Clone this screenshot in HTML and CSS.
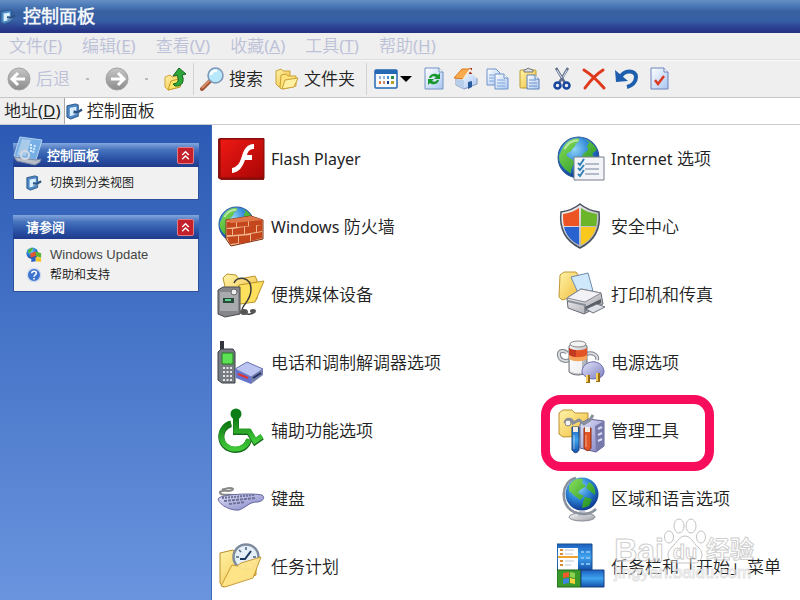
FILE: index.html
```html
<!DOCTYPE html>
<html lang="zh-CN">
<head>
  <meta charset="UTF-8">
  <title>控制面板</title>
  <link rel="stylesheet" href="styles.css">
</head>
<body>
  <!-- shared shapes and gradients -->
  <svg class="defs" width="0" height="0" aria-hidden="true">
    <defs>
      <radialGradient id="sea" cx="40%" cy="30%" r="75%">
        <stop offset="0" stop-color="#8fd4f7"/><stop offset=".5" stop-color="#2b83d6"/><stop offset="1" stop-color="#0a2f86"/>
      </radialGradient>
      <linearGradient id="land" x2="1" y2="1"><stop offset="0" stop-color="#8be05a"/><stop offset="1" stop-color="#178a1d"/></linearGradient>
      <linearGradient id="folder" x2="1" y2="1"><stop offset="0" stop-color="#fff3a8"/><stop offset="1" stop-color="#f0bd3c"/></linearGradient>
      <linearGradient id="metal" x2="1" y2="1"><stop offset="0" stop-color="#fdfdfd"/><stop offset="1" stop-color="#9b9ba4"/></linearGradient>
      <linearGradient id="lilac" x2="1" y2="1"><stop offset="0" stop-color="#e6e6fa"/><stop offset="1" stop-color="#7a7cc0"/></linearGradient>
      <linearGradient id="paper" x2="1" y2="1"><stop offset="0" stop-color="#fff"/><stop offset="1" stop-color="#a9c6f2"/></linearGradient>
      <linearGradient id="gray" x2="0" y2="1"><stop offset="0" stop-color="#c6c6c6"/><stop offset="1" stop-color="#8c8c8c"/></linearGradient>
      <linearGradient id="red" x2="1" y2="1"><stop offset="0" stop-color="#ef1a14"/><stop offset="1" stop-color="#a80505"/></linearGradient>
      <linearGradient id="green" x2="0" y2="1"><stop offset="0" stop-color="#0d7a12"/><stop offset="1" stop-color="#42c93a"/></linearGradient>
      <linearGradient id="blue" x2="0" y2="1"><stop offset="0" stop-color="#1c5fc0"/><stop offset=".5" stop-color="#3fa4ee"/><stop offset="1" stop-color="#1450ac"/></linearGradient>
      <symbol id="globe" viewBox="0 0 40 40">
        <circle cx="20" cy="20" r="19" fill="url(#sea)" stroke="#28549a"/>
        <path d="M4 14C7 6 13 2 20 2c2 2 0 4-3 5 1 3-3 4-4 7-2 2-4 1-4 4 2 3 5 3 7 6-1 4-3 6-3 11C6 31 1 25 2 18zM26 3c5 2 9 5 11 10l-4 3 1 5c2 1 3 1 4 0-1 6-4 10-8 13-3-3-3-6-2-9-3-2-5-5-4-8l5-4-1-4 2-3z" fill="url(#land)"/>
        <path d="M7 12C10 6 14 4 20 4" fill="none" stroke="#fff" stroke-width="2" opacity=".5"/>
      </symbol>
      <symbol id="panel" viewBox="0 0 18 18">
        <path d="M1 3l9-2 3 1v12l-8 3-4-2z" fill="#4a86c4" stroke="#2a5486"/>
        <path d="M4 5l7-1v8l-7 2z" fill="#dcefff"/>
        <path d="M8 9l4 1 5-3" fill="none" stroke="#2a5486" stroke-width="2.500"/>
        <path d="M8 11l3 1 3-1" fill="none" stroke="#6a8fb8" stroke-width="1.500"/>
      </symbol>
      <symbol id="chevrons" viewBox="0 0 18 18">
        <path d="M5 8.500l4-4 4 4M5 13.500l4-4 4 4" fill="none" stroke="#fff" stroke-width="1.600"/>
      </symbol>
    </defs>
  </svg>

  <header class="titlebar">
    <svg class="title-icon" viewBox="0 0 18 18"><use href="#panel"/></svg>
    <h1>控制面板</h1>
  </header>

  <nav class="menubar">
    <button>文件(<u>F</u>)</button>
    <button>编辑(<u>E</u>)</button>
    <button>查看(<u>V</u>)</button>
    <button>收藏(<u>A</u>)</button>
    <button>工具(<u>T</u>)</button>
    <button>帮助(<u>H</u>)</button>
  </nav>

  <div class="toolbar">
    <button class="tool off">
      <svg viewBox="0 0 24 24"><circle cx="12" cy="12" r="11" fill="url(#gray)" stroke="#a2a2a2"/><path d="M11 6l-6 6 6 6M6 12h12" fill="none" stroke="#fff" stroke-width="3"/></svg>
      <span>后退</span>
    </button>
    <span class="dot"></span>
    <button class="tool off" aria-label="前进">
      <svg viewBox="0 0 24 24"><circle cx="12" cy="12" r="11" fill="url(#gray)" stroke="#a2a2a2"/><path d="M13 6l6 6-6 6M18 12H6" fill="none" stroke="#fff" stroke-width="3"/></svg>
    </button>
    <span class="dot"></span>
    <button class="tool up" aria-label="向上">
      <svg viewBox="0 0 24 24">
        <path d="M1 10l5-2 2 2 8-2v12L4 23l-3-3z" fill="url(#folder)" stroke="#d0a436"/>
        <path d="M4 23l3-9 12-3-3 9z" fill="#ffe567" stroke="#c79a2c"/>
        <path d="M9 17c6-1 6-4 4-9l-4 1 6-8 7 6-4 1c3 6 0 12-7 11z" fill="#2fa63a" stroke="#12651c"/>
      </svg>
    </button>
    <span class="sep"></span>
    <button class="tool search">
      <svg viewBox="0 0 24 24">
        <path d="M2 22l8-8" stroke="#a4583a" stroke-width="4" stroke-linecap="round"/>
        <path d="M2 21l8-8" stroke="#e59a72" stroke-width="1.500"/>
        <circle cx="15.500" cy="8.500" r="7.500" fill="#b8e8fb" stroke="#7c95b8" stroke-width="1.500"/>
        <path d="M11 8c0-3 3-5 6-4" fill="none" stroke="#fff" stroke-width="2.500"/>
      </svg>
      <span>搜索</span>
    </button>
    <button class="tool folders">
      <svg viewBox="0 0 24 24">
        <path d="M1 4l5-2 2 2h7v11L4 20l-3-3z" fill="url(#folder)" stroke="#c9a136"/>
        <path d="M6 8l5-1 2 2 8 0v10L8 22l-3-1z" fill="#ffe279" stroke="#c9a136"/>
        <path d="M7 22l3-9 13-2-4 9z" fill="#fff0a2" stroke="#c9a136"/>
      </svg>
      <span>文件夹</span>
    </button>
    <span class="sep"></span>
    <button class="tool views" aria-label="查看">
      <svg viewBox="0 0 24 24">
        <rect x="1" y="3" width="22" height="18" rx="1" fill="#f7fbff" stroke="#2468b4" stroke-width="1.500"/>
        <path d="M1 3h22v4H1z" fill="#2468b4"/>
        <path d="M5 9h2v3H5zM9 9h2v3H9z" fill="#8fb1d8"/><path d="M13 9h2v3h-2z" fill="#3c8dd0"/><path d="M17 9h3v3h-3z" fill="#298b40"/>
        <path d="M5 14h2v3H5z" fill="#e27b38"/><path d="M9 14h2v3H9z" fill="#d0906c"/><path d="M13 14h2v3h-2z" fill="#163a7a"/><path d="M17 14h3v3h-3z" fill="#b8a020"/>
      </svg>
      <svg class="arrow" viewBox="0 0 12 6"><path d="M0 0h12L6 6z"/></svg>
    </button>
    <div class="tools">
      <button class="tool" aria-label="刷新">
        <svg viewBox="0 0 24 24"><path d="M3 1h14l4 4v17H3z" fill="url(#paper)" stroke="#7292c4"/><path d="M17 1v4h4" fill="#fff" stroke="#7292c4"/><path d="M7 11c1-5 7-5 9-3l2-2v6h-6l2-2c-2-1-4-1-5 1zM17 13c-1 5-7 5-9 3l-2 2v-6h6l-2 2c2 1 4 1 5-1z" fill="#16982a"/></svg>
      </button>
      <button class="tool" aria-label="主页">
        <svg viewBox="0 0 24 24"><path d="M2 11v7l8 4 13-5v-7l-6-6z" fill="url(#paper)" stroke="#8496b8"/><path d="M2 12v6l8 4v-9z" fill="#b8cdea"/><path d="M14 15l4-1v6l-4 2z" fill="#285a9c"/><path d="M15 1h3v6h-3z" fill="#a33420"/><path d="M0 11L8 2l9 0-7 10z" fill="#f9ab4c" stroke="#d67a22"/><path d="M9 13l7-10 8 8" fill="none" stroke="#f2ede6" stroke-width="2"/></svg>
      </button>
      <button class="tool" aria-label="复制">
        <svg viewBox="0 0 24 24"><path d="M1 2h9l4 4v12H1z" fill="url(#paper)" stroke="#6f92c8"/><path d="M3 8h5M3 11h5M3 14h5" stroke="#7da6da"/><path d="M9 7h9l4 4v11H9z" fill="url(#paper)" stroke="#6f92c8"/><path d="M18 7v4h4" fill="#fff" stroke="#6f92c8"/><path d="M11 13h8M11 16h8M11 19h8" stroke="#7da6da"/></svg>
      </button>
      <button class="tool" aria-label="粘贴">
        <svg viewBox="0 0 24 24"><rect x="2" y="3" width="16" height="18" rx="1" fill="url(#folder)" stroke="#b79a34"/><path d="M6 5V3l3-1 1-1 2 1 3 1v2z" fill="#d8dce4" stroke="#777"/><path d="M9 8h8l4 4v10H9z" fill="url(#paper)" stroke="#5c80b8"/><path d="M17 8v4h4" fill="#fff" stroke="#5c80b8"/><path d="M11 13h7M11 16h8M11 19h8" stroke="#6d93c8"/></svg>
      </button>
      <button class="tool" aria-label="剪切">
        <svg viewBox="0 0 24 24"><path d="M6 1l9 15M18 1L9 16" stroke="#5f6f8c" stroke-width="2.500"/><path d="M7 3l5 8M17 3l-4 7" stroke="#dfe6f2"/><circle cx="7.500" cy="18.500" r="3" fill="none" stroke="#17479e" stroke-width="2.500"/><circle cx="16.500" cy="18.500" r="3" fill="none" stroke="#17479e" stroke-width="2.500"/></svg>
      </button>
      <button class="tool" aria-label="删除">
        <svg viewBox="0 0 24 24"><path d="M2 3c8 5 14 11 20 18M21 3C13 8 8 14 3 21" fill="none" stroke="#df3a1d" stroke-width="3" stroke-linecap="round"/></svg>
      </button>
      <button class="tool" aria-label="撤消">
        <svg viewBox="0 0 24 24"><path d="M6 11c4-9 16-8 16-1 0 5-4 9-9 10" fill="none" stroke="#1d5fae" stroke-width="4"/><path d="M1 3l1 12 12-1z" fill="#1d5fae"/></svg>
      </button>
      <button class="tool" aria-label="属性">
        <svg viewBox="0 0 24 24"><path d="M5 1h13l4 4v17H5z" fill="url(#paper)" stroke="#6a82ba"/><path d="M18 1v4h4" fill="#fff" stroke="#6a82ba"/><path d="M9 13l3 4 6-8" fill="none" stroke="#d9391f" stroke-width="2.500"/></svg>
      </button>
    </div>
  </div>

  <div class="addressbar">
    <label for="address">地址(<u>D</u>)</label>
    <div class="address-box">
      <svg viewBox="0 0 18 18"><use href="#panel"/></svg>
      <input type="text" id="address" value="控制面板">
    </div>
  </div>

  <div class="content">
    <aside class="sidebar">
      <section class="panel">
        <div class="panel-head with-icon">
          <svg class="panel-icon" viewBox="0 0 30 30">
            <path d="M7 1l22 3-6 20L1 20z" fill="#76aee6" stroke="#b6d2ee"/>
            <path d="M9 3l9 1-5 16-9-1z" fill="#a9cbe9"/>
            <path d="M18 8v9M22 9l-2 8" stroke="#d7ecff" stroke-width="2" stroke-dasharray="2 1"/>
            <path d="M1 21l22 3 5-1-1 3-5 3L4 25z" fill="#b7bdc9" stroke="#7b8aa5"/>
            <circle cx="12" cy="19" r="4" fill="none" stroke="#d5d9e2" stroke-width="2"/>
          </svg>
          <h2>控制面板</h2>
          <button class="collapse" aria-label="折叠"><svg viewBox="0 0 18 18"><use href="#chevrons"/></svg></button>
        </div>
        <div class="panel-body">
          <a href="#"><svg viewBox="0 0 18 18"><use href="#panel"/></svg>切换到分类视图</a>
        </div>
      </section>
      <section class="panel">
        <div class="panel-head">
          <h2>请参阅</h2>
          <button class="collapse" aria-label="折叠"><svg viewBox="0 0 18 18"><use href="#chevrons"/></svg></button>
        </div>
        <div class="panel-body">
          <a class="latin" href="#">
            <svg viewBox="0 0 18 18"><circle cx="7" cy="7" r="6.500" fill="url(#sea)"/><path d="M2 4c2-3 5-3 6-3l-2 4-3 2z" fill="#4bb83c"/><path d="M5 7l6-2v5l-6 2z" fill="#e6552a"/><path d="M11 5l6 2v5l-6-2z" fill="#5cb234"/><path d="M6 12l5-1v5l-5 1z" fill="#2b62c8"/><path d="M11 11l6 1v5l-6-1z" fill="#f1c52c"/></svg>Windows Update</a>
          <a href="#">
            <svg viewBox="0 0 18 18"><circle cx="9" cy="9" r="7.500" fill="#3d74cf" stroke="#cfdcf2" stroke-width="1.500"/><path d="M6.500 7c0-3 5.500-3 5 0 0 2-2.500 2-2.500 4M9 12.500v1.500" fill="none" stroke="#fff" stroke-width="1.800"/></svg>帮助和支持</a>
        </div>
      </section>
    </aside>

    <main class="items">
      <a class="item" href="#">
        <svg viewBox="0 0 48 48"><path d="M1 4l2-1h44v42H4l-3-2z" fill="#8d1513"/><rect x="3" y="4" width="44" height="39" fill="url(#red)" stroke="#7c0a08"/><path d="M37 9v5c-4 0-6 2-7 6h5v5h-7c-3 8-6 12-13 13v-5c6-1 8-6 10-12 2-7 5-12 12-12z" fill="#fff"/></svg>
        <span class="en">Flash Player</span>
      </a>
      <a class="item" href="#">
        <svg viewBox="0 0 48 48"><use href="#globe" x="1" y="3" width="37" height="37"/><path d="M9 17l25-4 12 4v19L14 43l-5-7z" fill="#f0b48a" stroke="#7e3112"/><g fill="#c4461c"><path d="M10 19l9-1v6l-9 1zM20 18l11-1v6l-11 1zM32 16l13 1v5l-13 1zM10 26h5v6h-5zM16 26l11-2v7l-11 1zM28 24l11-2v7l-11 2zM40 23l5-1v6l-5 1zM10 34l11-1v7l-8 1zM22 33l11-1v7l-11 2zM34 31l11-2v6l-11 3z"/></g><path d="M9 17l25-4 12 4-32 3z" fill="#e0774a"/></svg>
        <span><span class="en">Windows</span> 防火墙</span>
      </a>
      <a class="item" href="#">
        <svg viewBox="0 0 48 48"><path d="M6 7l4-4 9 1 3 4 16-3 2 4v19L12 33z" fill="url(#folder)" stroke="#b9932a"/><path d="M16 34l6-20 25-4-9 21z" fill="#ffe05c" stroke="#b9932a"/><path d="M1 19l5-3h17v27L8 46l-7-3z" fill="#85868a" stroke="#4a4a4e"/><path d="M3 21h18v19H3z" fill="#a8aaae"/><path d="M6 27h11v5H6z" fill="#28493a"/><path d="M8 29h6" stroke="#5fd08b" stroke-width="2"/><circle cx="17" cy="21" r="3" fill="#eee" stroke="#666"/><path d="M17 12c3-8 17-6 17 6 0 10-6 14-8 18-4 7 7 9 12 5" fill="none" stroke="#3a3a3a" stroke-width="1.500"/><ellipse cx="27" cy="41" rx="4" ry="3" fill="#555"/><ellipse cx="36" cy="40" rx="3" ry="2" fill="#555"/></svg>
        <span>便携媒体设备</span>
      </a>
      <a class="item" href="#">
        <svg viewBox="0 0 48 48"><path d="M3 2h4v12H3z" fill="#33363c"/><path d="M1 13l3-3h12l2 3v31H5l-4-3z" fill="#777b82" stroke="#3b3e44"/><path d="M5 14h11v11H5z" fill="#5de055" stroke="#267b25"/><path d="M6 29h9M6 33h9M6 37h9M6 41h9" stroke="#e8e8e8" stroke-width="2" stroke-dasharray="2 1.500"/><path d="M18 30l12-7 16 7-12 8z" fill="#bcc4f2" stroke="#6771ad"/><path d="M18 30l16 8v7l-15-6z" fill="#6673cc"/><path d="M34 38l12-8v6l-12 9z" fill="#7680ae"/><path d="M21 35l10 4" stroke="#e03434" stroke-width="2"/><path d="M36 39l8-5" stroke="#27325e" stroke-width="2"/></svg>
        <span>电话和调制解调器选项</span>
      </a>
      <a class="item" href="#">
        <svg viewBox="0 0 48 48"><g fill="none" stroke="#15691b" stroke-width="6"><path d="M14 17C0 21 1 42 18 43c8 0 12-4 14-10"/><path d="M19 12v13h13l6 10 7-5"/></g><circle cx="19" cy="7" r="5.500" fill="#0c7d17"/><g fill="none" stroke="url(#green)" stroke-width="5"><path d="M14 16C0 20 1 41 18 42c8 0 12-4 14-10"/><path d="M19 11v13h13l6 10 7-5"/></g></svg>
        <span>辅助功能选项</span>
      </a>
      <a class="item" href="#">
        <svg viewBox="0 0 48 48"><path d="M20 21c-4-3-18 1-17-4 2-3 12 1 13-3-3-3-9 1-11 0" fill="none" stroke="#888" stroke-width="2"/><path d="M1 24c2-5 36-6 44-4 4 3 0 7-5 7-8 0-10 5-18 8-7 1-19-4-21-11z" fill="url(#lilac)" stroke="#6466a0"/><path d="M5 23l33-3" stroke="#6c6e98" stroke-width="2" stroke-dasharray="2 1"/><path d="M7 26l32-3" stroke="#6c6e98" stroke-width="2" stroke-dasharray="3 1"/><path d="M12 29l16-2" stroke="#6c6e98" stroke-width="2" stroke-dasharray="3 1"/></svg>
        <span>键盘</span>
      </a>
      <a class="item" href="#">
        <svg viewBox="0 0 48 48"><path d="M3 10l13-3 3 4 20-2v23L6 44l-3-4z" fill="url(#folder)" stroke="#b98d2a"/><circle cx="29" cy="14" r="12.500" fill="#e5eff8" stroke="#7d8b9c" stroke-width="2.500"/><path d="M29 4v3M29 21v3M19 14h3M36 14h3M22 7l2 2M34 19l2 2" stroke="#4b6485" stroke-width="1.500"/><path d="M34 8l-6 8h-5" fill="none" stroke="#1d3860" stroke-width="2"/><path d="M4 43l11-21 5 1 4-3 20-6-8 21-28 9z" fill="#ffe489" stroke="#c69831" opacity=".95"/></svg>
        <span>任务计划</span>
      </a>

      <a class="item" href="#">
        <svg viewBox="0 0 48 48"><use href="#globe" x="0" y="1" width="43" height="43"/><path d="M17 22h30v23H17z" fill="#f3f4f7" stroke="#777e8a"/><path d="M28 29h14M28 34h14M28 39h14" stroke="#74819a"/><path d="M21 28l2 2 4-6M21 33l2 2 4-5M21 39l2 2 4-6" fill="none" stroke="#3482b8" stroke-width="2"/></svg>
        <span><span class="en">Internet</span> 选项</span>
      </a>
      <a class="item" href="#">
        <svg viewBox="0 0 48 48"><path d="M23 1c6 5 12 7 19 8 2 17-5 29-19 36C9 38 2 26 4 9 11 8 17 6 23 1z" fill="url(#metal)" stroke="#46515e" stroke-width="1.500"/><path d="M22 5v18H7c-1-4-1-8-1-12 7-1 12-3 16-6z" fill="#ed5423"/><path d="M24 5c4 3 9 5 16 6 0 4 0 8-1 12H24z" fill="#6bb52b"/><path d="M7 24h15v18C14 38 9 32 7 24z" fill="#2862ce"/><path d="M24 24h15c-2 8-7 14-15 18z" fill="#f8c91c"/></svg>
        <span>安全中心</span>
      </a>
      <a class="item" href="#">
        <svg viewBox="0 0 48 48"><path d="M3 4l4-3h12l3 4v19L5 29l-3-3z" fill="url(#folder)" stroke="#c09736"/><path d="M14 6l17-4 5 18-14 4z" fill="#cfe8fc" stroke="#6c8bad"/><path d="M10 27l14-9 20 4 2 11-19 10-16-6z" fill="url(#metal)" stroke="#666b74"/><path d="M10 27l14-9 20 4-16 9z" fill="#f2f2f6" stroke="#868993"/><path d="M11 30l17 4v8" fill="none" stroke="#888e98" stroke-width="2"/><path d="M28 36l16-8v4l-15 8z" fill="#585d66"/><path d="M29 38l11-5 8 3-12 6z" fill="#dfe1e8" stroke="#6e727c"/></svg>
        <span>打印机和传真</span>
      </a>
      <a class="item" href="#">
        <svg viewBox="0 0 48 48"><path d="M15 20C8 24 2 21 2 16c-1-5 6-5 8-2M29 15c7-2 12 1 11 6" fill="none" stroke="#80848c" stroke-width="4"/><path d="M15 20C8 24 2 21 2 16c-1-5 6-5 8-2M29 15c7-2 12 1 11 6" fill="none" stroke="#d8dae0" stroke-width="2"/><path d="M12 7c3-3 15-3 18 0v26c-4 4-14 4-18 0z" fill="url(#metal)" stroke="#71747c"/><path d="M13 20c4 2 9 2 12 2v12c-4 1-9 0-12-2z" fill="#fff" opacity=".8"/><path d="M12 9c5 3 13 3 18 0v10c-5 3-13 3-18 0z" fill="#e35526"/><path d="M12 9c3 2 5 2 7 2v10c-3 0-5-1-7-2z" fill="#c23a20"/><path d="M12 16c5 3 13 3 18 0v4c-5 3-13 3-18 0z" fill="#f7a55a"/><ellipse cx="21" cy="5" rx="8" ry="3" fill="#f4f4f4" stroke="#888"/><path d="M25 34c-1-13 20-16 22-2 0 4-2 6-5 7-6 2-13 1-17-5z" fill="url(#lilac)" stroke="#6a6cb0"/><path d="M31 36v8M41 34v9" stroke="#9a6b15" stroke-width="4"/><path d="M30 36v7M40 34v8" stroke="#f1cf60" stroke-width="2"/></svg>
        <span>电源选项</span>
      </a>
      <a class="item marked" href="#">
        <svg viewBox="0 0 48 48"><path d="M2 6l4-3h9l3 3h13v23L6 30l-4-3z" fill="url(#folder)" stroke="#bd9030"/><path d="M23 17l8-5 16 2v25l-8 6-16-4z" fill="url(#lilac)" stroke="#5d6092"/><path d="M38 19l9-5v25l-8 6z" fill="#7779aa"/><path d="M41 22l4-2M41 28l4-2M41 34l4-2" stroke="#d8d9f4" stroke-width="2"/><path d="M8 16c1-5 7-5 8 0l6-3 5 4 6-4 3-5" fill="none" stroke="#888f9b" stroke-width="3"/><circle cx="11" cy="16" r="3" fill="#f4f4f4" stroke="#888"/><path d="M15 20h7v23c-2 4-5 3-7 0z" fill="url(#blue)" stroke="#184274"/><path d="M27 21h7v20c-2 4-5 3-7 0z" fill="#e25525" stroke="#8f2c12"/><path d="M16 20h5v5h-5zM28 20h5v5h-5z" fill="#f3ede5"/><path d="M17 28v14M29 28v12" stroke="#fff" opacity=".5"/></svg>
        <span>管理工具</span>
      </a>
      <a class="item" href="#">
        <svg viewBox="0 0 48 48"><ellipse cx="25" cy="42" rx="13" ry="4" fill="url(#metal)" stroke="#888c95"/><path d="M22 36h6l2 6h-9z" fill="#c4c7cf"/><path d="M19 3C4 6 2 30 17 37c8 3 16 3 22-3" fill="none" stroke="#8c929d" stroke-width="2.500"/><circle cx="25" cy="19" r="16.500" fill="url(#sea)"/><path d="M12 11c4-7 9-8 14-7l-1 4 4 3-6 4-2 3 6 3-4 4-5-4-6-5zM32 7c5 3 7 8 6 13l-5-4-4-3zM28 22l7 2-3 7-7 2 1-6z" fill="url(#land)"/></svg>
        <span>区域和语言选项</span>
      </a>
      <a class="item" href="#">
        <svg viewBox="0 0 48 48"><path d="M0 1h35v26H0z" fill="url(#blue)" stroke="#1b4e92"/><path d="M1 5h20v22H1z" fill="#fff"/><path d="M3 7h3M3 11h3M3 18h3M3 22h3" stroke="#da8b38" stroke-width="2"/><path d="M8 7h9M8 11h8M8 18h9M8 22h6" stroke="#bcc6d2"/><path d="M1 14h20" stroke="#efa52d" stroke-width="2"/><path d="M24 9h3M24 15h3M24 21h3M29 9h4M29 15h4M29 21h4" stroke="#7dbdf2" stroke-width="2"/><path d="M0 27h24v17H0z" fill="#3a9a2b" stroke="#1c6415"/><path d="M24 27h23v17H24z" fill="url(#blue)" stroke="#163f80"/><path d="M6 30l6-1v5l-6 1z" fill="#ee5a2a"/><path d="M13 29l5 1v5l-5-1z" fill="#90d14d"/><path d="M6 36l6-1v5l-6 1z" fill="#3e83e2"/><path d="M13 35l5 1v5l-5-1z" fill="#f5d03a"/></svg>
        <span>任务栏和「开始」菜单</span>
      </a>

      <div class="watermark">
        <div class="brand">
          <span>Bai</span>
          <span class="paw">
            <svg viewBox="0 0 42 46"><g fill="#fff" fill-opacity=".5" stroke="#b4b4b4"><ellipse cx="5" cy="19" rx="4.500" ry="6"/><ellipse cx="15" cy="8" rx="5" ry="7"/><ellipse cx="27" cy="8" rx="5" ry="7"/><ellipse cx="37" cy="19" rx="4.500" ry="6"/><path d="M21 18c6 0 8 7 13 11 7 6 4 16-4 16-4 0-14 0-18 0-8 0-11-10-4-16 5-4 7-11 13-11z"/></g></svg>
            <b>du</b>
          </span>
          <span>经验</span>
        </div>
        <div class="site">jingyan.baidu.com</div>
      </div>
    </main>
  </div>
</body>
</html>
```
FILE: styles.css
```css
* {
  box-sizing: border-box;
}
body {
  margin: 0;
  height: 100vh;
  display: flex;
  flex-direction: column;
  overflow: hidden;
  font-family: "Noto Sans", "Noto Sans CJK SC DemiLight", "Noto Sans CJK SC", sans-serif;
  font-size: 17px;
  color: #222;
  background: #efefef;
}
h1, h2 {
  margin: 0;
}
button {
  font: inherit;
  color: inherit;
  background: none;
  border: none;
  padding: 0;
}
a {
  color: inherit;
  text-decoration: none;
}
svg {
  flex: none;
}
.defs {
  position: absolute;
}

/* title bar */
.titlebar {
  flex: none;
  height: 33px;
  display: flex;
  align-items: center;
  gap: 7px;
  background: linear-gradient(#678fc5 0, #4a78b6 6px, #37609f 12px, #3761a6 20px, #263488 31px, #253382);
}
.title-icon {
  width: 16px;
  height: 16px;
}
.titlebar h1 {
  font-size: 18px;
  font-weight: bold;
  line-height: 30px;
  padding-bottom: 2px;
  color: #f2f6fb;
}

/* menu */
.menubar {
  flex: none;
  height: 27px;
  padding: 0 9px;
  display: flex;
  gap: 20px;
  align-items: center;
  line-height: 24px;
  color: #bcc1d8;
  border-bottom: 1px solid #dedede;
}

/* toolbar */
.toolbar {
  flex: none;
  height: 38px;
  padding: 0 7px;
  display: flex;
  align-items: center;
  line-height: 24px;
  border-top: 1px solid #fafafa;
  border-bottom: 1px solid #c6c6c6;
}
.tool {
  display: flex;
  align-items: center;
  gap: 5px;
}
.tool svg {
  width: 24px;
  height: 24px;
}
.off {
  color: #bcc1d8;
}
.dot {
  width: 3px;
  height: 2px;
  margin: 0 16px;
  background: #bbb;
}
.up {
  margin-right: 5px;
}
.sep {
  width: 1px;
  height: 32px;
  background: #d2d2d2;
}
.search {
  margin: 0 12px 0 6px;
}
.folders {
  margin-right: 11px;
}
.views {
  gap: 2px;
  margin: 0 10px 0 7px;
}
.views .arrow {
  width: 12px;
  height: 6px;
}
.tools {
  display: flex;
  gap: 8px;
}

/* address */
.addressbar {
  flex: none;
  height: 27px;
  display: flex;
  align-items: center;
  padding-left: 4px;
  gap: 3px;
  line-height: 24px;
  border-bottom: 1px solid #c9cbd0;
}
.address-box {
  flex: 1;
  align-self: stretch;
  display: flex;
  align-items: center;
  gap: 4px;
  padding-left: 1px;
  background: #fff;
  border-left: 1px solid #a8a8a8;
}
.address-box svg {
  width: 17px;
  height: 17px;
}
.address-box input {
  flex: 1;
  min-width: 0;
  border: none;
  outline: none;
  padding: 0;
  font: inherit;
  color: inherit;
}

/* task pane */
.content {
  flex: 1;
  min-height: 0;
  display: flex;
  background: #fff;
}
.sidebar {
  flex: none;
  width: 212px;
  padding: 18px 12px 18px 13px;
  display: flex;
  flex-direction: column;
  gap: 15px;
  background: linear-gradient(#2c59b3, #4472c6 40%, #6a94de);
  border-right: 1px solid #3f68b8;
}
.panel {
  font-size: 12px;
}
.panel-head {
  position: relative;
  height: 24px;
  padding: 0 5px 0 13px;
  display: flex;
  align-items: center;
  justify-content: space-between;
  color: #fff;
  background: linear-gradient(#82a6dc 0, #4672bd 7px, #2c55a8 15px, #1f3a8c);
}
.panel-head.with-icon {
  padding-left: 34px;
}
.panel-icon {
  position: absolute;
  left: 0;
  bottom: 1px;
  width: 30px;
  height: 30px;
}
.panel-head h2 {
  font-size: 13px;
  line-height: 24px;
}
.collapse {
  display: flex;
  border: 1px solid #e07b82;
  border-radius: 2px;
  background: #c3202c;
}
.collapse svg {
  width: 15px;
  height: 15px;
}
.panel-body {
  padding: 6px 12px;
  background: #f0f1f0;
  border: 1px solid #2e4f9c;
  border-top: none;
}
.panel-body a {
  display: flex;
  align-items: center;
  gap: 8px;
  line-height: 20px;
  color: #111;
}
.panel-body svg {
  width: 16px;
  height: 16px;
}
.panel-body .latin {
  font-family: "Liberation Sans", sans-serif;
  font-size: 13px;
  color: #444;
}

/* icons list */
.items {
  flex: 1;
  position: relative;
  display: grid;
  grid-template-columns: 7fr 5fr;
  grid-template-rows: repeat(7, 68px);
  grid-auto-flow: column;
  justify-items: start;
  padding-left: 5px;
  overflow: hidden;
}
.item {
  position: relative;
  display: flex;
  align-items: center;
  gap: 6px;
  line-height: 24px;
  white-space: nowrap;
}
.item svg {
  width: 48px;
  height: 48px;
}
.en {
  font-size: 16px;
}
.marked::after {
  content: "";
  position: absolute;
  inset: -2px -35px -6px -16px;
  border: 9px solid #f80d5c;
  border-radius: 20px;
}

/* watermark */
.watermark {
  position: absolute;
  right: 46px;
  bottom: 18px;
  font-family: "Liberation Sans", "Noto Sans CJK SC", sans-serif;
  color: rgba(255, 255, 255, .6);
  -webkit-text-stroke: 1px #c4c4c4;
  opacity: .8;
}
.brand {
  display: flex;
  align-items: flex-end;
  font-size: 24px;
  font-weight: bold;
  line-height: 28px;
}
.brand > span:first-child {
  font-size: 32px;
}
.paw {
  display: grid;
  place-items: end center;
  font-size: 20px;
  line-height: 24px;
}
.paw > * {
  grid-area: 1 / 1;
}
.paw svg {
  width: 42px;
  height: 46px;
}
.site {
  font-size: 17px;
  line-height: 18px;
  -webkit-text-stroke: 1px #ddd;
}
```
